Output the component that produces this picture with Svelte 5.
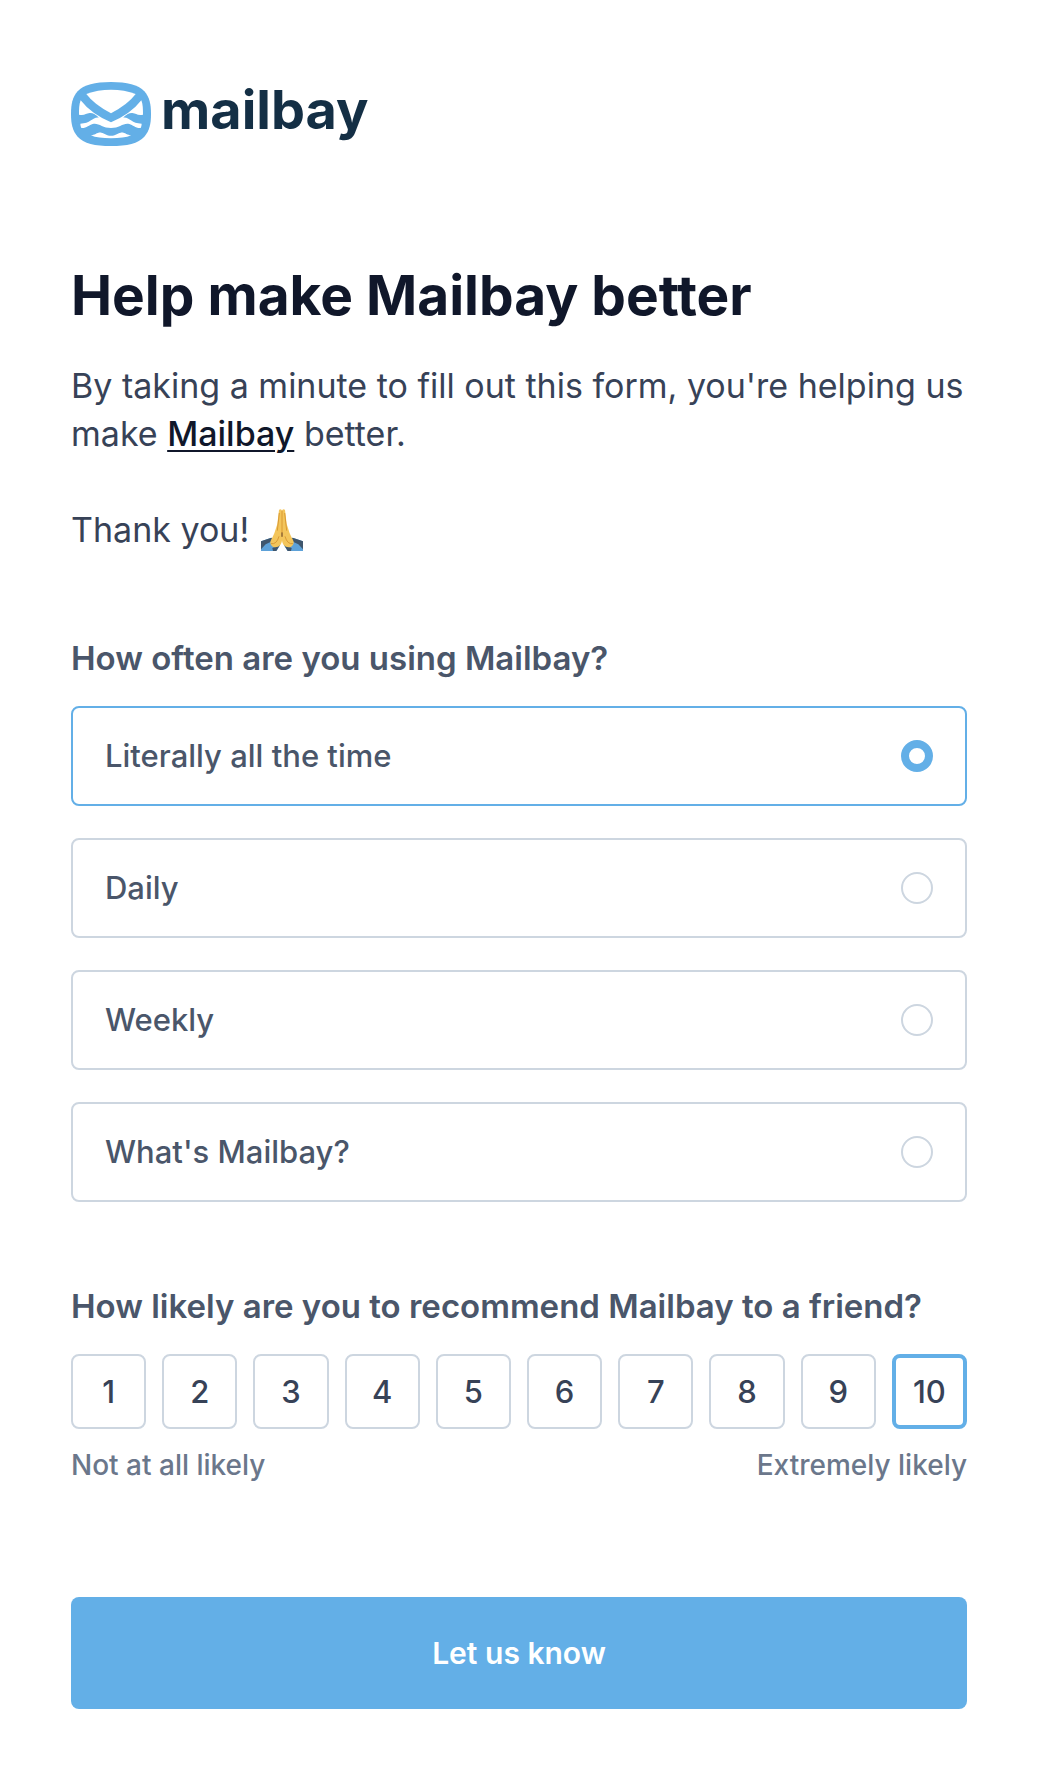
<script lang="ts">
  const frequencies = ["Literally all the time", "Daily", "Weekly", "What's Mailbay?"];
  const scores = [1, 2, 3, 4, 5, 6, 7, 8, 9, 10];

  let frequency = $state(frequencies[0]);
  let score = $state(10);

  function submit(event: SubmitEvent) {
    event.preventDefault();
  }
</script>

<main class="page">
  <header class="brand">
    <svg class="brand-mark" viewBox="0 0 240 192" aria-hidden="true">
      <path
        fill="#63afe7"
        d="M120 0C168 0 202 8 220 28C236 46 240 68 240 96C240 124 236 146 220 164C202 184 168 192 120 192C72 192 38 184 20 164C4 146 0 124 0 96C0 68 4 46 20 28C38 8 72 0 120 0Z"
      />
      <g fill="#fff">
        <path d="M46 36C67 27 94 23 120 23C146 23 173 27 194 36Q172 66 120 94Q68 66 46 36Z" />
        <path
          d="M29 55Q61 96 120 121Q179 96 211 55C216 68 216 82 216 98L212 125Q212 132 209 138C193 139 186 129 175 126C158 121 146 138 120 138C94 138 82 121 65 126C54 129 47 139 31 138Q28 132 28 125L24 98C24 82 24 68 29 55Z"
        />
        <path d="M59 160C72 160 79 150 91 152C101 154 107 161 120 161C133 161 139 154 149 152C161 150 168 160 181 160C166 167 145 169 120 169C95 169 74 167 59 160Z" />
      </g>
      <g fill="#63afe7">
        <path d="M12 98H24C42 101 44 94 56 93Q70 92 84 107C64 104 60 125 28 125H12Z" />
        <path d="M228 98H216C198 101 196 94 184 93Q170 92 156 107C176 104 180 125 212 125H228Z" />
      </g>
    </svg>
    <span class="brand-name">mailbay</span>
  </header>

  <h1>Help make Mailbay better</h1>
  <p class="intro">
    By taking a minute to fill out this form, you're helping us make <a href="#mailbay">Mailbay</a> better.
  </p>
  <p class="thanks">
    Thank you!
    <svg class="hands" viewBox="0 0 126 126" role="img" aria-label="Folded hands">
      <path fill="#5da1d8" d="M0 97L31 86L57 109L46 126H0Z" />
      <path fill="#5da1d8" d="M126 97L95 86L69 109L80 126H126Z" />
      <path fill="#3f566d" d="M0 97L31 86L40 94L14 106L0 121Z" />
      <path fill="#3f566d" d="M126 97L95 86L86 94L112 106L126 121Z" />
      <path fill="#3f566d" d="M34 117L57 108L46 126H36Z" />
      <path fill="#3f566d" d="M92 117L69 108L80 126H90Z" />
      <path fill="#f3c55b" d="M54 3C57-1 63 1 63 7V94C62 106 55 115 43 115C34 115 27 107 28 98C31 90 37 81 40 73L49 45Z" />
      <path fill="#f3c55b" d="M72 3C69-1 63 1 63 7V94C64 106 71 115 83 115C92 115 99 107 98 98C95 90 89 81 86 73L77 45Z" />
      <path fill="none" stroke="#d99a35" stroke-width="3" d="M63 5V72M55 12L49 65M71 12L77 65M30 104Q47 107 54 82M96 104Q79 107 72 82" />
      <path fill="none" stroke="#80572c" stroke-width="4" stroke-linecap="round" d="M63 72V82" />
    </svg>
  </p>

  <form onsubmit={submit}>
    <fieldset>
      <legend>How often are you using Mailbay?</legend>
      <div class="options">
        {#each frequencies as option}
          <label class="option" class:selected={frequency === option}>
            <span>{option}</span>
            <input type="radio" name="frequency" value={option} bind:group={frequency} />
          </label>
        {/each}
      </div>
    </fieldset>

    <fieldset>
      <legend>How likely are you to recommend Mailbay to a friend?</legend>
      <div class="scores">
        {#each scores as value}
          <label class="score" class:selected={score === value}>
            <input type="radio" name="score" {value} bind:group={score} />
            <span>{value}</span>
          </label>
        {/each}
      </div>
      <div class="scale">
        <span>Not at all likely</span>
        <span>Extremely likely</span>
      </div>
    </fieldset>

    <button type="submit">Let us know</button>
  </form>
</main>

<style>
  :global(body) {
    background: #fff;
  }

  .page {
    --accent: #63afe7;
    --line: #cdd6e0;
    --ink: #10172a;
    --text: #374257;
    --label: #4a566a;
    --muted: #6b778b;

    padding: 82px 73px 69px 71px;
    color: var(--text);
    font-family: Inter, "Noto Sans", sans-serif;
  }

  .brand {
    display: flex;
    align-items: flex-start;
    gap: 10px;
  }

  .brand-mark {
    width: 80px;
    height: 64px;
  }

  .brand-name {
    color: #142f45;
    font-size: 54px;
    font-weight: 700;
    line-height: 56px;
  }

  h1 {
    margin: 117px 0 35px;
    color: var(--ink);
    font-size: 55px;
    font-weight: 700;
    line-height: 64px;
  }

  p {
    margin: 0;
    font-size: 34px;
    line-height: 48px;
  }

  .intro a {
    color: var(--ink);
    font-weight: 500;
    text-decoration-thickness: 2px;
    text-underline-offset: 4px;
  }

  .thanks {
    display: flex;
    align-items: center;
    gap: 12px;
    margin-top: 48px;
  }

  .hands {
    width: 42px;
    height: 42px;
  }

  fieldset {
    min-width: 0;
    margin: 80px 0 0;
    padding: 0;
    border: 0;
  }

  legend {
    padding: 0;
    margin-bottom: 24px;
    color: var(--label);
    font-size: 33px;
    font-weight: 600;
    line-height: 48px;
  }

  .options {
    display: grid;
    gap: 32px;
  }

  .option {
    display: flex;
    align-items: center;
    justify-content: space-between;
    padding: 24px 32px;
    border: 2px solid var(--line);
    border-radius: 8px;
    color: var(--label);
    font-size: 31px;
    font-weight: 500;
    line-height: 48px;
  }

  .option.selected {
    border-color: var(--accent);
  }

  .option input {
    appearance: none;
    width: 32px;
    height: 32px;
    margin: 0;
    border: 2px solid var(--line);
    border-radius: 50%;
  }

  .option input:checked {
    border: 8px solid var(--accent);
  }

  .scores {
    display: grid;
    grid-template-columns: repeat(10, minmax(0, 1fr));
    gap: 16px;
  }

  .score {
    position: relative;
    display: grid;
    place-items: center;
    box-sizing: border-box;
    aspect-ratio: 1;
    border: 2px solid var(--line);
    border-radius: 8px;
    font-size: 31px;
    font-weight: 500;
    line-height: 40px;
  }

  .score.selected {
    border: 4px solid var(--accent);
  }

  .score input {
    position: absolute;
    inset: 0;
    margin: 0;
    opacity: 0;
  }

  .scale {
    display: flex;
    justify-content: space-between;
    margin-top: 16px;
    color: var(--muted);
    font-size: 28px;
    font-weight: 500;
    line-height: 40px;
  }

  button {
    display: block;
    width: 100%;
    margin-top: 112px;
    padding: 32px;
    border: 0;
    border-radius: 8px;
    color: #fff;
    background: var(--accent);
    font: inherit;
    font-size: 30px;
    font-weight: 600;
    line-height: 48px;
  }
</style>
